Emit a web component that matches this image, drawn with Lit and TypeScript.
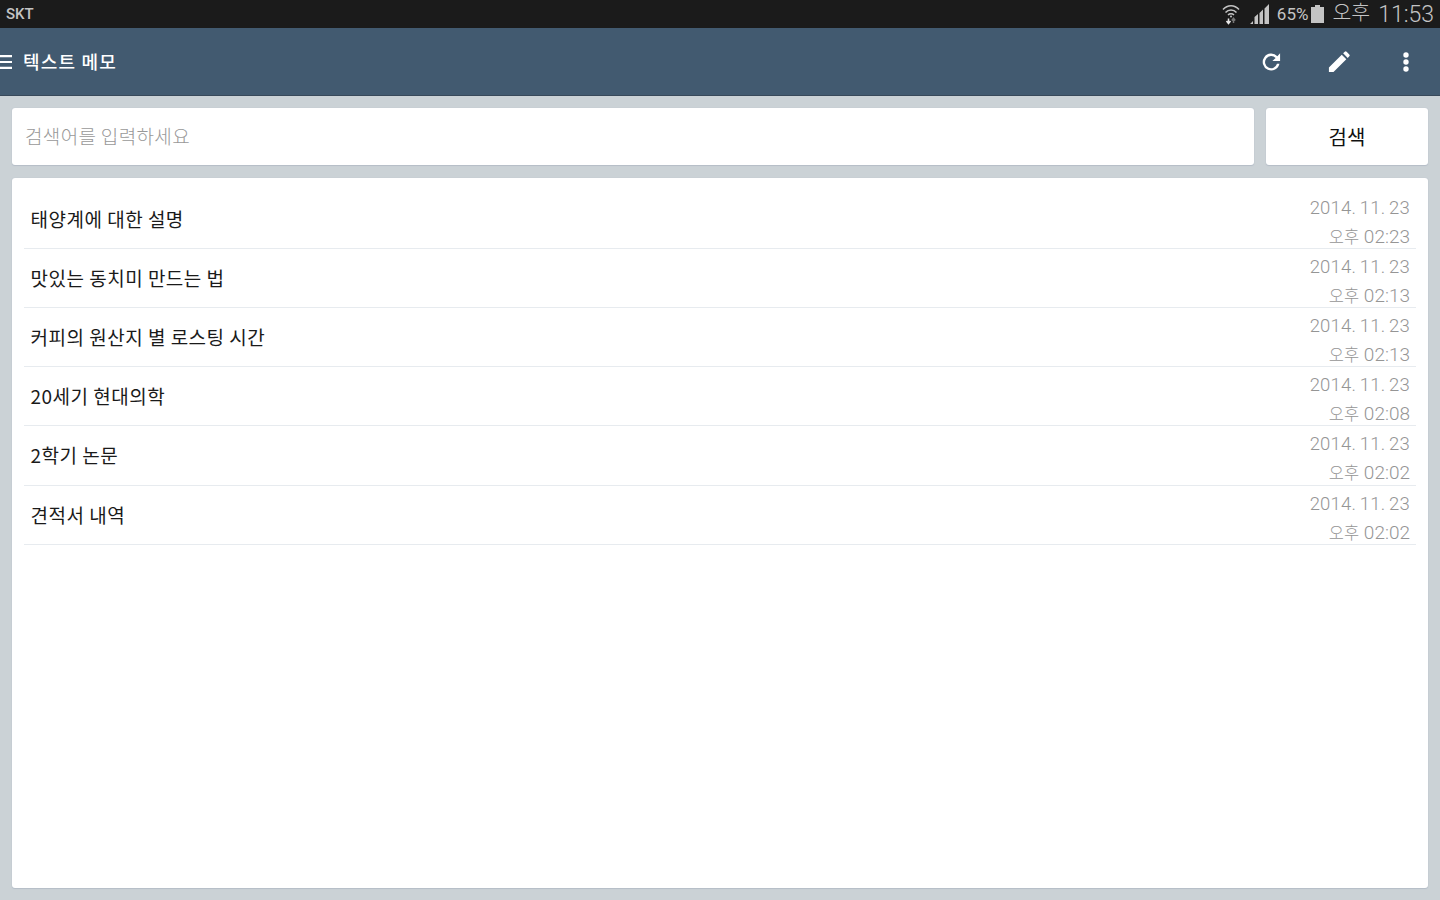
import { LitElement, html, css } from 'lit';
import { customElement } from 'lit/decorators.js';

const memos = [
  { title: '태양계에 대한 설명', date: '2014. 11. 23', time: '02:23' },
  { title: '맛있는 동치미 만드는 법', date: '2014. 11. 23', time: '02:13' },
  { title: '커피의 원산지 별 로스팅 시간', date: '2014. 11. 23', time: '02:13' },
  { title: '20세기 현대의학', date: '2014. 11. 23', time: '02:08' },
  { title: '2학기 논문', date: '2014. 11. 23', time: '02:02' },
  { title: '견적서 내역', date: '2014. 11. 23', time: '02:02' },
];

@customElement('app-root')
export class AppRoot extends LitElement {
  static styles = css`
    :host {
      display: flex;
      flex-direction: column;
      height: 900px;
      overflow: hidden;
      background: #cbd2d6;
      font-family: 'Noto Sans CJK KR', 'Noto Sans', sans-serif;
      color: #111;
    }
    * {
      box-sizing: border-box;
    }

    .status {
      height: 28px;
      flex: none;
      display: flex;
      align-items: center;
      justify-content: space-between;
      padding: 0 6px;
      background: #1b1b1b;
      color: #c4c4c4;
    }
    .carrier {
      font: 500 15px Roboto, sans-serif;
    }
    .status__right {
      display: flex;
      align-items: center;
    }
    .status__icon {
      display: block;
    }
    .signal {
      margin-left: 9px;
    }
    .battery-pct {
      margin-left: 7px;
      font: 17px Roboto, sans-serif;
    }
    .battery {
      margin-left: 3px;
    }
    .ampm {
      margin: 0 0 2px 8px;
      font: 300 20.5px/24px Roboto, 'Noto Sans CJK KR', sans-serif;
    }
    .clock {
      margin-left: 8px;
      font: 300 23px Roboto, sans-serif;
    }

    .bar {
      height: 68px;
      flex: none;
      display: flex;
      align-items: center;
      background: #425a70;
      border-bottom: 1px solid #38495a;
      color: #fff;
    }
    .bar__title {
      margin: 0 0 2px 11px;
      font-size: 18px;
      font-weight: 500;
      letter-spacing: 1.2px;
      line-height: 64px;
    }
    .bar__actions {
      margin-left: auto;
      display: flex;
      align-items: center;
    }
    .action {
      width: 67.5px;
      display: flex;
      justify-content: center;
    }

    .search {
      flex: none;
      display: flex;
      gap: 12px;
      padding: 12px 12px 0;
    }
    .panel {
      background: #fff;
      border-radius: 3px;
      box-shadow: 0 0 1px #aeb7c2, 0 1px 1px #b6bec8;
    }
    .search__input {
      flex: 1;
      height: 57px;
      padding: 0 13px 3px;
      display: flex;
      align-items: center;
      font-size: 19px;
      font-weight: 300;
      color: #989898;
      letter-spacing: 0.35px;
    }
    .search__btn {
      width: 162px;
      height: 57px;
      display: flex;
      align-items: center;
      justify-content: center;
      font-size: 20px;
      color: #111;
    }

    .list {
      margin: 13px 12px 12px;
      flex: 1;
      padding: 11.6px 12px 0;
    }
    .row {
      height: 59.2px;
      display: flex;
      align-items: center;
      justify-content: space-between;
      padding: 0 6px;
      border-bottom: 1px solid #e7ebef;
    }
    .row__title {
      margin-bottom: 1px;
      padding-left: 0.5px;
      font-size: 19px;
      letter-spacing: 0.5px;
      font-weight: 400;
      color: #1a1a1a;
    }
    .row__meta {
      margin-top: 7px;
      text-align: right;
      color: #959595;
    }
    .row__date,
    .row__time {
      display: block;
      height: 29px;
      font: 300 19px/29px Roboto, sans-serif;
    }
    .row__date {
      height: 28px;
      font-size: 18.5px;
      line-height: 28px;
      letter-spacing: 0.2px;
      word-spacing: -1px;
    }
    .row__ampm {
      font-family: 'Noto Sans CJK KR', sans-serif;
      font-size: 16.5px;
      font-weight: 300;
    }
  `;

  render() {
    return html`
      <div class="status">
        <span class="carrier">SKT</span>
        <div class="status__right">
          <svg class="status__icon" width="18" height="22" viewBox="0 0 18 22" fill="none" stroke="#c4c4c4" stroke-width="1.5">
            <path d="M1 6.500C5.500 1.500 12.500 1.500 17 6.500" />
            <path d="M3.500 9.500C6.500 6 11.500 6 14.500 9.500" />
            <path d="M6 12C7.700 10.300 10.300 10.300 12 12" />
            <circle cx="9" cy="13.500" r="1" fill="#c4c4c4" stroke="none" />
            <path d="M6.500 15.500V20M4.500 18l2 2.500 2-2.500" stroke="#e8e8e8" />
            <path d="M11.500 20v-4.500M9.800 17.500l1.700-2.200 1.700 2.200" stroke="#777" />
          </svg>
          <svg class="status__icon signal" width="21" height="20" viewBox="0 0 21 20" fill="#c4c4c4">
            <path d="M1 20l3-3v3zM5.500 20v-7l3.500-3v10zM10.500 20V9l3.500-3.500V20zM15.500 20V4.500L20 0v20z" />
          </svg>
          <span class="battery-pct">65%</span>
          <svg class="status__icon battery" width="13" height="18" viewBox="0 0 13 18" fill="#c4c4c4">
            <path d="M4 0h5v2h4v16H0V2h4z" />
          </svg>
          <span class="ampm">오후</span>
          <span class="clock">11:53</span>
        </div>
      </div>

      <div class="bar">
        <svg width="12" height="16" viewBox="0 0 12 16" fill="#fff">
          <path d="M0 1h12v2.200H0zM0 6.900h12v2.200H0zM0 12.800h12V15H0z" />
        </svg>
        <span class="bar__title">텍스트 메모</span>
        <div class="bar__actions">
          <span class="action">
            <svg width="20" height="20" viewBox="0 0 22 22" fill="#fff">
              <path d="M18 4.700A9.300 9.300 0 1 0 20.300 13h-2.700a6.700 6.700 0 1 1-1.500-6.500L12.500 10H21V1.500z" />
            </svg>
          </span>
          <span class="action">
            <svg width="22" height="22" viewBox="0 0 24 24" fill="#fff">
              <path d="M1 23V18L15 4l5 5L6 23zM16.500 2.500 18.300 .8a1.400 1.400 0 0 1 2 0l2.900 2.900a1.400 1.400 0 0 1 0 2L21.500 7.500z" />
            </svg>
          </span>
          <span class="action">
            <svg width="6" height="20" viewBox="0 0 6 20" fill="#fff">
              <circle cx="3" cy="3" r="2.700" />
              <circle cx="3" cy="10" r="2.700" />
              <circle cx="3" cy="17" r="2.700" />
            </svg>
          </span>
        </div>
      </div>

      <div class="search">
        <div class="panel search__input">검색어를 입력하세요</div>
        <div class="panel search__btn">검색</div>
      </div>

      <div class="panel list">
        ${memos.map(
          (m) => html`
            <div class="row">
              <span class="row__title">${m.title}</span>
              <div class="row__meta">
                <span class="row__date">${m.date}</span>
                <span class="row__time"><span class="row__ampm">오후</span> ${m.time}</span>
              </div>
            </div>
          `,
        )}
      </div>
    `;
  }
}
